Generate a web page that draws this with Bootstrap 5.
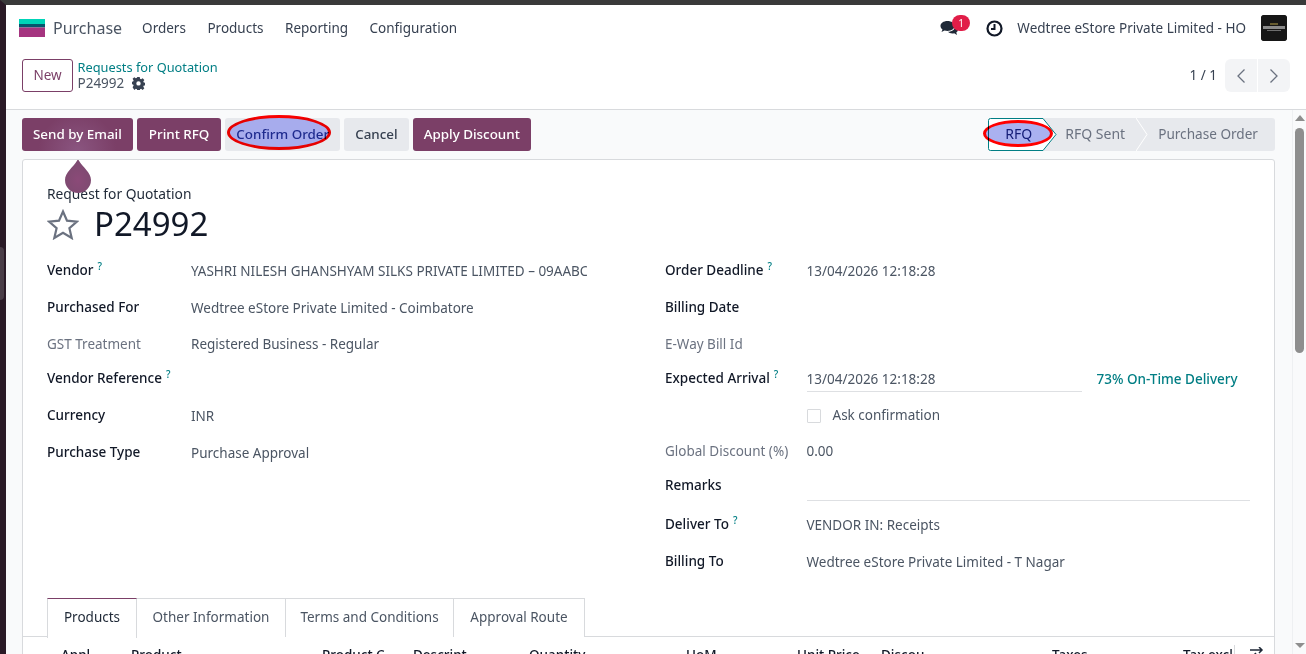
<!DOCTYPE html>
<html lang="en">
<head>
    <meta charset="UTF-8">
    <meta name="viewport" content="width=device-width, initial-scale=1.0">
    <title>Purchase</title>
    <link rel="stylesheet" href="https://cdn.jsdelivr.net/npm/bootstrap@5.3.0/dist/css/bootstrap.min.css">
    <style>
        html, body { height: 100%; overflow: hidden; }
        body { font-family: "Noto Sans", sans-serif; font-size: 13.5px; color: #374151; background: #fff; }
        .screen { height: 654px; border-top: 5px solid #3a3a3a; border-left: 6px solid #2a1a26; display: flex; flex-direction: column; position: relative; }
        .screen::before { content: ""; position: absolute; left: -6px; top: 242px; width: 4px; height: 53px; background: #4a3d47; border-radius: 0 4px 4px 0; }
        .topbar { height: 46px; padding: 0 19px 0 13px; flex: none; }
        .logo { margin-right: 8px; flex: none; }
        .brand { font-size: 16px; color: #4b5563; margin-right: 20px; }
        .menu { gap: 21.5px; }
        .menu-link { color: #374151; text-decoration: none; }
        .chat { margin-right: 27px; }
        .chat-badge { position: absolute; top: -5px; left: 12px; background: #e11d48; color: #fff; font-size: 10px; line-height: 14px; border-radius: 9px; padding: 1px 6px; }
        .clock { margin-right: 14px; }
        .company { margin-right: 15px; }
        .avatar { width: 26px; height: 26px; background: #161616; border-radius: 3px; display: block; }
        .control { height: 59px; padding: 8px 16px 0 16px; border-bottom: 1px solid #d8dadd; flex: none; }
        .btn-new { color: #7b3f67; border: 1px solid #7b3f67; background: #fff; border-radius: 3px; height: 33px; width: 51px; padding: 0; font-size: 13.5px; }
        .crumbs { margin-left: 4.5px; }
        .crumb { color: #017e84; font-size: 12.8px; line-height: 16px; text-decoration: none; }
        .crumb-sub { font-size: 13.5px; line-height: 16px; color: #4b5563; }
        .pager { height: 33px; }
        .pager-group { gap: 1px; }
        .pager-btn { width: 32px; height: 33px; background: #f3f4f6; border: 0; padding: 0; display: flex; align-items: center; justify-content: center; }
        .main { flex: 1; min-height: 0; background: #f9fafb; display: flex; overflow: hidden; }
        .content { flex: 1; min-width: 0; padding: 8px 17px 0 16px; }
        .sbar { width: 14px; flex: none; background: #f9fafb; border-left: 1px solid #eef0f2; display: flex; flex-direction: column; align-items: center; position: relative; }
        .sbar-thumb { width: 9px; height: 225px; background: #8e8e8e; border-radius: 5px; margin-top: 7px; }
        .arrow-up { width: 0; height: 0; border: 5px solid transparent; border-top: 0; border-bottom: 6px solid #8e8e8e; margin-top: 5px; }
        .arrow-down { width: 0; height: 0; border: 5px solid transparent; border-bottom: 0; border-top: 5px solid #8e8e8e; position: absolute; bottom: 6px; }
        .actions { margin-bottom: 8px; }
        .action-group { gap: 4px; }
        .btn-o { height: 33px; border: 0; border-radius: 3px; padding: 0 11px; font-size: 13.4px; font-weight: 500; }
        .btn-print { padding: 0 12px; }
        .btn-p { background: #7b3f67; color: #fff; }
        .btn-ripple { background: radial-gradient(circle at 50% 100%, #8a5580, #7b3f67 60%); }
        .btn-s { background: #e7e9ed; color: #374151; }
        .btn-confirm { color: #2b3a8f; }
        .mark { position: absolute; border: 3px solid #ff0000; border-radius: 50%; mix-blend-mode: multiply; pointer-events: none; }
        .mark-confirm { left: 2px; top: -3px; width: 104px; height: 35px; background: #b8bcff; }
        .mark-rfq { left: -5px; top: 2px; width: 70px; height: 27px; background: #aab1f0; }
        .statusbar { height: 33px; background: #e7e9ed; border-radius: 3px; font-size: 14px; color: #6b7280; }
        .stage { height: 33px; display: flex; align-items: center; position: relative; padding-bottom: 2px; }
        .stage-rfq { width: 60px; justify-content: center; color: #1f2a80; }
        .stage-rfq .label { position: relative; margin-left: 1px; }
        .stage-sent { padding-left: 17px; padding-right: 11px; }
        .stage-po { padding-left: 22px; padding-right: 17px; padding-bottom: 0; font-size: 13.6px; }
        .sheet { background: #fff; border: 1px solid #d8dadd; border-radius: 3px 3px 0 0; height: 520px; overflow: hidden; padding: 26px 24px 0 24px; position: relative; }
        .drop { position: absolute; left: 42px; top: -1px; width: 26px; height: 34px; }
        .kind { font-size: 13.8px; color: #1f2937; line-height: 16px; }
        .title-row { gap: 15px; margin-top: 2px; }
        .title-no { font-size: 33px; line-height: 40px; color: #111827; }
        .fields { margin-top: 8px; }
        .left { width: 618px; }
        .frow { display: flex; align-items: center; height: 37px; }
        .pull-1 { margin-top: -1px; }
        .pull-3 { margin-top: -3px; }
        .push-2 { margin-top: 2px; }
        .flabel { font-weight: 500; color: #111827; flex: none; }
        .flabel.muted { font-weight: 400; color: #6b7280; }
        .left .flabel { width: 144px; }
        .right .flabel { width: 141.5px; }
        .fvalue { color: #4b5563; white-space: nowrap; padding-top: 2px; }
        .vendor { width: 396px; overflow: hidden; }
        .help { color: #017e84; font-size: 10px; margin-left: 4px; font-weight: 500; }
        .under { border-bottom: 1px solid #dee0e3; }
        .arrival { width: 275px; line-height: 24px; }
        .otd { color: #017e84; font-weight: 500; margin-left: 15px; padding-top: 2px; }
        .chk { width: 14px; height: 14px; border: 1px solid #d8dadd; border-radius: 1px; margin-right: 12px; }
        .plain { padding-top: 0; }
        .remarks-line { flex-grow: 1; align-self: flex-end; margin-bottom: 3px; }
        .tabs-row { margin: 17.5px -24px 0 -24px; padding-left: 24px; border-bottom: 1px solid #d8dadd; height: 39px; display: flex; }
        .otab { height: 39px; border: 1px solid #d8dadd; border-bottom: 0; border-left: 0; display: flex; align-items: center; justify-content: center; color: #4b5563; background: #fff; }
        .otab.active { border-left: 1px solid #d8dadd; border-top: 1px solid #7b3f67; color: #1f2937; height: 40px; padding-bottom: 2px; }
        .tab-products { width: 90px; }
        .tab-other { width: 149px; }
        .tab-terms { width: 168px; }
        .tab-route { width: 131px; }
        .th-row { display: flex; font-weight: 500; color: #111827; padding: 8px 0 0 14px; white-space: nowrap; }
        .th-row > * { flex: none; }
        .c-appl { width: 70px; }
        .c-product { width: 191px; }
        .c-code { width: 91px; }
        .c-desc { width: 116px; }
        .c-qty { width: 157px; }
        .c-uom { width: 111px; }
        .c-price { width: 84px; }
        .c-disc { width: 171px; }
        .c-tax { width: 131px; }
        .c-excl { width: 52px; border-right: 1px solid #d8dadd; }
        .c-opt { margin-left: 15px; margin-top: 2px; }
    </style>
</head>
<body>
<div class="screen">
    <div class="topbar d-flex align-items-center">
        <svg width="26" height="18" viewBox="0 0 26 18" class="logo">
            <rect width="26" height="5" fill="#00d4b8"/><rect y="5" width="26" height="3.500" fill="#05566d"/><rect y="8.500" width="26" height="9.500" fill="#a5347f"/>
        </svg>
        <span class="brand">Purchase</span>
        <div class="menu d-flex">
            <a class="menu-link" href="#">Orders</a>
            <a class="menu-link" href="#">Products</a>
            <a class="menu-link" href="#">Reporting</a>
            <a class="menu-link" href="#">Configuration</a>
        </div>
        <div class="ms-auto d-flex align-items-center">
            <div class="chat position-relative">
                <svg width="19" height="17" viewBox="0 0 19 17" class="d-block"><path d="M7.500 1C3.400 1 .5 3.200.5 6c0 1.500.8 2.700 2 3.600L1.500 12l3-1.500c1 .3 2 .4 3 .4 4 0 7-2.200 7-4.900S11.500 1 7.500 1z" fill="#1f2937"/><path d="M15.500 5.500c.1 3.500-3.300 6.200-7.500 6.300 1 1.100 2.600 1.700 4.300 1.700.7 0 1.300-.1 1.900-.2l2.800 1.700-.7-2.600c1.100-.8 1.700-1.800 1.700-3 0-1.600-1-3-2.500-3.900z" fill="#1f2937"/></svg>
                <span class="chat-badge">1</span>
            </div>
            <svg width="17" height="17" viewBox="0 0 17 17" class="clock"><circle cx="8.500" cy="8.500" r="7" fill="none" stroke="#111827" stroke-width="2.200"/><path d="M8.500 4v5H5" fill="none" stroke="#111827" stroke-width="2"/></svg>
            <span class="company">Wedtree eStore Private Limited - HO</span>
            <svg class="avatar" viewBox="0 0 26 26"><rect width="26" height="26" rx="3" fill="#161616"/><rect x="9" y="8.500" width="8" height="1" fill="#b8a24a"/><rect x="2" y="11" width="22" height="3" fill="#8a8a8a"/><rect x="6" y="15" width="14" height="1" fill="#6e6e6e"/></svg>
        </div>
    </div>
    <div class="control d-flex align-items-start">
        <button class="btn-new">New</button>
        <div class="crumbs">
            <a class="crumb d-block" href="#">Requests for Quotation</a>
            <div class="crumb-sub d-flex align-items-center gap-2">P24992
                <svg width="13" height="13" viewBox="0 0 16 16"><path fill="#374151" fill-rule="evenodd" d="M6.500 0h3l.4 2.200 1.300.6 1.900-1.300 2.100 2.100-1.300 1.900.6 1.300 2.200.4v3l-2.200.4-.6 1.300 1.300 1.900-2.100 2.100-1.900-1.300-1.300.6-.4 2.200h-3l-.4-2.200-1.300-.6-1.900 1.300L.7 12.500 2 10.600l-.6-1.300L-.8 8.900v-3l2.200-.4.6-1.300L.7 2.300l2.100-2.100 1.900 1.300 1.300-.6zM8 5.200a2.700 2.700 0 1 0 0 5.400 2.700 2.700 0 0 0 0-5.400z"/></svg>
            </div>
        </div>
        <div class="pager ms-auto d-flex align-items-center">
            <span class="me-2">1 / 1</span>
            <div class="pager-group d-flex">
                <button class="pager-btn rounded-start"><svg width="10" height="16" viewBox="0 0 10 16"><path d="M8.500 1.500 2 8l6.500 6.500" fill="none" stroke="#6b7280" stroke-width="1.300"/></svg></button>
                <button class="pager-btn rounded-end"><svg width="10" height="16" viewBox="0 0 10 16"><path d="M1.500 1.500 8 8l-6.500 6.500" fill="none" stroke="#6b7280" stroke-width="1.300"/></svg></button>
            </div>
        </div>
    </div>
    <div class="main">
        <div class="content">
            <div class="actions d-flex align-items-center">
                <div class="action-group d-flex">
                    <button class="btn-o btn-p btn-ripple">Send by Email</button>
                    <button class="btn-o btn-p btn-print">Print RFQ</button>
                    <button class="btn-o btn-s btn-confirm position-relative">Confirm Order<span class="mark mark-confirm"></span></button>
                    <button class="btn-o btn-s">Cancel</button>
                    <button class="btn-o btn-p">Apply Discount</button>
                </div>
                <div class="statusbar ms-auto d-flex">
                    <div class="stage stage-rfq">
                        <svg width="69" height="33" viewBox="0 0 69 33" class="position-absolute top-0 start-0"><path d="M2.500.5H55L68 16.500 55 32.500H2.500a2 2 0 0 1-2-2V2.500a2 2 0 0 1 2-2z" fill="#fff" stroke="#017e84"/></svg>
                        <span class="label">RFQ</span>
                        <span class="mark mark-rfq"></span>
                    </div>
                    <div class="stage stage-sent">RFQ Sent</div>
                    <div class="stage stage-po">
                        <svg width="12" height="33" viewBox="0 0 12 33" class="position-absolute top-0 start-0"><path d="M0 0 11 16.500 0 33" fill="none" stroke="#fff"/></svg>
                        Purchase Order
                    </div>
                </div>
            </div>
            <div class="sheet">
                <div class="kind">Request for Quotation</div>
                <div class="title-row d-flex align-items-center">
                    <svg width="32" height="31" viewBox="0 0 32 31"><path d="M16 2.500l4 9.200 10 .9-7.600 6.600 2.300 9.800L16 23.800 7.300 29l2.300-9.800L2 12.600l10-.9z" fill="none" stroke="#6b7280" stroke-width="2.200"/></svg>
                    <span class="title-no">P24992</span>
                </div>
                <div class="row g-0 fields">
                    <div class="col-auto left">
                        <div class="frow"><span class="flabel">Vendor<sup class="help">?</sup></span><span class="fvalue vendor">YASHRI NILESH GHANSHYAM SILKS PRIVATE LIMITED – 09AABC</span></div>
                        <div class="frow"><span class="flabel">Purchased For</span><span class="fvalue">Wedtree eStore Private Limited - Coimbatore</span></div>
                        <div class="frow"><span class="flabel muted">GST Treatment</span><span class="fvalue plain">Registered Business - Regular</span></div>
                        <div class="frow pull-3"><span class="flabel">Vendor Reference<sup class="help">?</sup></span></div>
                        <div class="frow"><span class="flabel">Currency</span><span class="fvalue">INR</span></div>
                        <div class="frow"><span class="flabel">Purchase Type</span><span class="fvalue">Purchase Approval</span></div>
                    </div>
                    <div class="col right">
                        <div class="frow"><span class="flabel">Order Deadline<sup class="help">?</sup></span><span class="fvalue">13/04/2026 12:18:28</span></div>
                        <div class="frow"><span class="flabel">Billing Date</span></div>
                        <div class="frow"><span class="flabel muted">E-Way Bill Id</span></div>
                        <div class="frow pull-3">
                            <span class="flabel">Expected Arrival<sup class="help">?</sup></span>
                            <span class="fvalue under arrival">13/04/2026 12:18:28</span>
                            <span class="otd">73% On-Time Delivery</span>
                        </div>
                        <div class="frow"><span class="flabel"></span><span class="chk"></span><span class="fvalue plain">Ask confirmation</span></div>
                        <div class="frow pull-1"><span class="flabel muted">Global Discount (%)</span><span class="fvalue plain">0.00</span></div>
                        <div class="frow pull-3"><span class="flabel">Remarks</span><span class="under remarks-line"></span></div>
                        <div class="frow push-2"><span class="flabel">Deliver To<sup class="help">?</sup></span><span class="fvalue">VENDOR IN: Receipts</span></div>
                        <div class="frow"><span class="flabel">Billing To</span><span class="fvalue">Wedtree eStore Private Limited - T Nagar</span></div>
                    </div>
                </div>
                <div class="tabs-row">
                    <div class="otab active tab-products">Products</div>
                    <div class="otab tab-other">Other Information</div>
                    <div class="otab tab-terms">Terms and Conditions</div>
                    <div class="otab tab-route">Approval Route</div>
                </div>
                <div class="th-row">
                    <span class="c-appl">Appl</span>
                    <span class="c-product">Product</span>
                    <span class="c-code">Product C</span>
                    <span class="c-desc">Descript</span>
                    <span class="c-qty">Quantity</span>
                    <span class="c-uom">UoM</span>
                    <span class="c-price">Unit Price</span>
                    <span class="c-disc">Discou</span>
                    <span class="c-tax">Taxes</span>
                    <span class="c-excl">Tax excl</span>
                    <svg class="c-opt" width="15" height="12" viewBox="0 0 15 12"><path d="M0 3h12M9 0l3 3-3 3M15 9H3m3-3L3 9l3 3" fill="none" stroke="#1f2937" stroke-width="1.500"/></svg>
                </div>
                <svg class="drop" viewBox="0 0 26 34"><defs><radialGradient id="dropfill" cx="50%" cy="62%" r="55%"><stop offset="0" stop-color="#8b4a78"/><stop offset="1" stop-color="#7d4a70"/></radialGradient></defs><path d="M13 0C9 8 0 13 0 21a13 13 0 0 0 26 0C26 13 17 8 13 0z" fill="url(#dropfill)"/></svg>
            </div>
        </div>
        <div class="sbar">
            <div class="arrow-up"></div>
            <div class="sbar-thumb"></div>
            <div class="arrow-down"></div>
        </div>
    </div>
</div>
<script src="https://cdn.jsdelivr.net/npm/bootstrap@5.3.0/dist/js/bootstrap.bundle.min.js"></script>
</body>
</html>
